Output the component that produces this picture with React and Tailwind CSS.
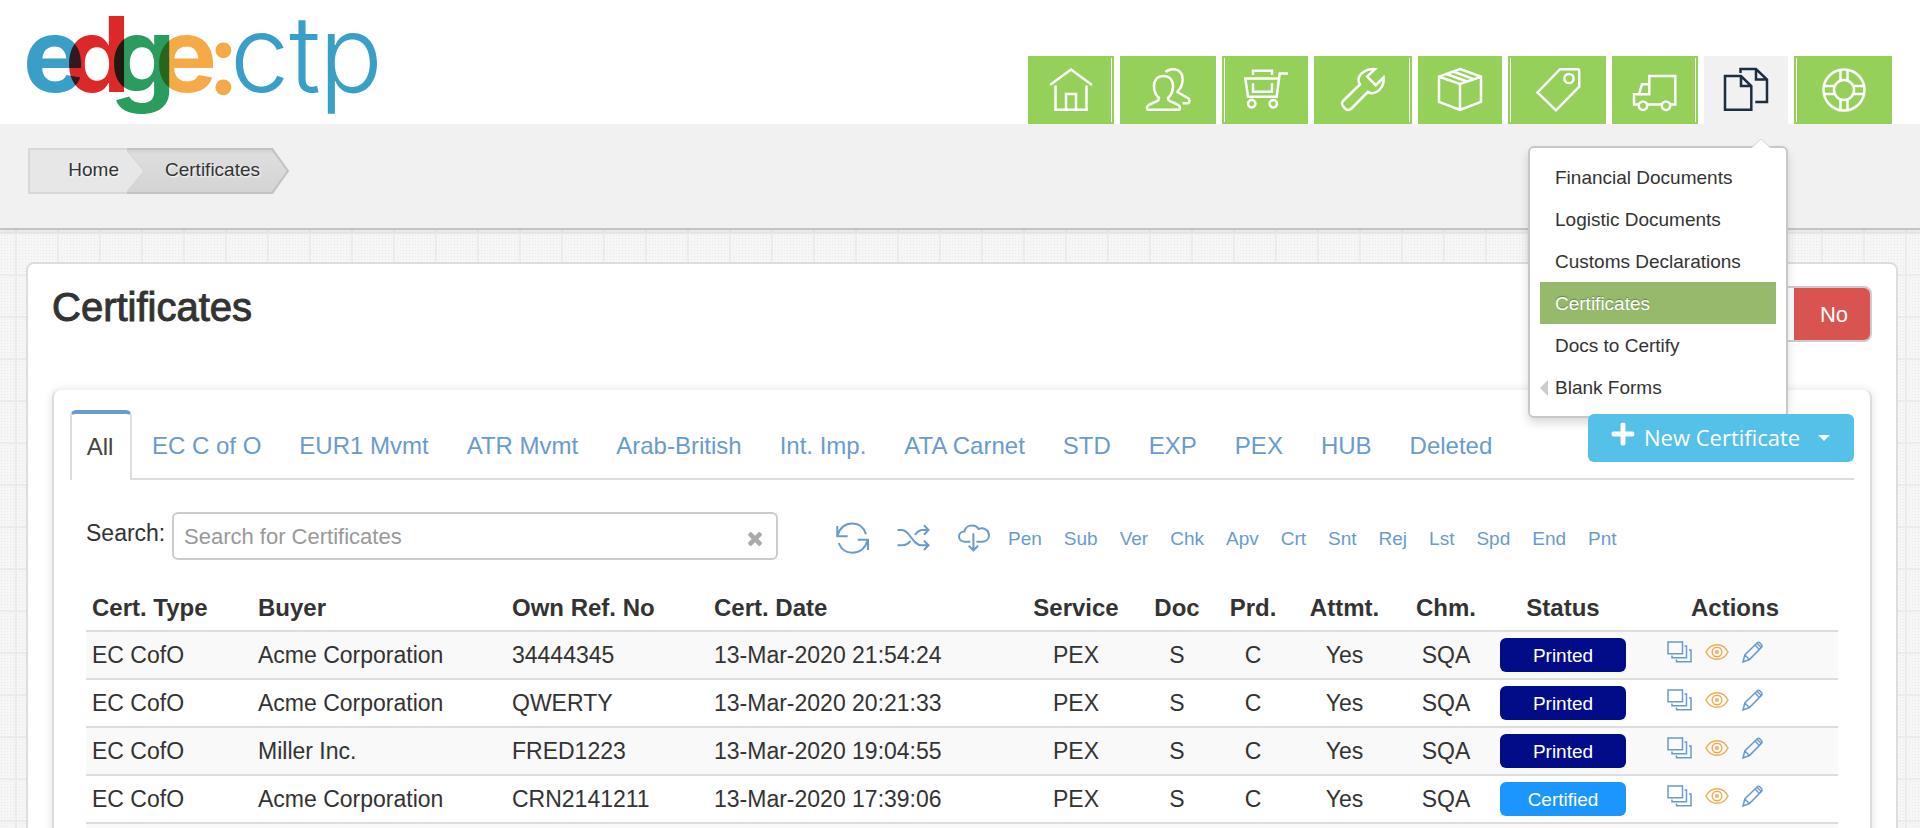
import { FaPlus, FaTimes } from "react-icons/fa";

const navItems = [
  {
    label: "Home",
    size: "w-[86px]",
    line: "border-r",
    icon: <path d="M1 17 22 1.5 43 17M6.5 17.5v24.2h31V17.5M17 41V26h10v15" />,
  },
  {
    label: "Contacts",
    size: "w-[96px]",
    line: "",
    icon: (
      <>
        <path d="M17.5 8c6 0 9.500 4 9.500 10 0 5-1.500 9-5 12 0 2 .5 2.500 2 3.200l7.500 3.300c2 1 2.500 2 2.500 3.500 0 1.300-.5 1.700-1.500 1.700h-30C1.500 41.700 1 41.300 1 40c0-1.500.5-2.500 2.500-3.500L11 33.200c1.500-.7 2-1.200 2-3.200C9.500 27 8 23 8 18 8 12 11.500 8 17.500 8z" />
        <path d="M19.500 4C23 .5 31-.5 35 5c2.500 4 2 9 0 14-1 2.500-3.500 3-3.500 5l9.500 5.500c2 1 2.500 1.500 2.500 3 0 2-.5 2.700-2 2.700h-5" />
      </>
    ),
  },
  {
    label: "Orders",
    size: "w-[86px]",
    line: "border-l",
    icon: (
      <>
        <path d="M44 5.500h-8.300l-3 23.200H4L1.300 10.500h33.500M9 7V2.700h19V7M9 15.300v8.400h19v-8.400" />
        <circle cx="7.700" cy="35.700" r="3.700" />
        <circle cx="29.300" cy="35.700" r="3.700" />
      </>
    ),
  },
  {
    label: "Tools",
    size: "w-[98px]",
    line: "border-r",
    icon: (
      <path d="M34 1.200C25 0 17.500 6 17.500 12c0 2.500.8 3 1.500 4.500L2.500 32.500C0 35 1 37 2.500 39l2 2c2 1.500 4 1.200 6-.5L26.700 24C35 28 43.500 20 42.500 9.500l-7.800 7.700-8.500-8.700z" />
    ),
  },
  {
    label: "Products",
    size: "w-[84px]",
    line: "",
    icon: (
      <path d="M22 1 43 8.700V34l-21 8L1 34V8.700zM1 8.700l21 7.300 21-7.300M22 16v26M8.500 6l20.700 7.500M15 3.500l20.700 7.700" />
    ),
  },
  {
    label: "Pricing",
    size: "w-[98px]",
    line: "border-l",
    icon: (
      <>
        <path d="M1.500 24.500 24 1.200h17.500c1.300 0 1.700.5 1.700 1.700v15.800L20 42.300z" />
        <circle cx="33" cy="10.500" r="4.600" />
      </>
    ),
  },
  {
    label: "Logistics",
    size: "w-[86px]",
    line: "border-r",
    icon: (
      <>
        <path d="M5.500 36.500H1V26.300h15.300V8h26v28.500h-4.800M28.500 36.500H14.500M6 26.300 9 16.200h7.300V27" />
        <circle cx="10" cy="37.700" r="4.200" />
        <circle cx="33" cy="37.700" r="4.200" />
      </>
    ),
  },
  {
    label: "Documents",
    size: "w-[84px]",
    line: "",
    active: true,
    icon: (
      <path d="M1 8h16l10.300 10v23.700H1zM17 8v10h10.300M16.500 5V1H32l11 10.500V34H31.300M32 1v10.500h11" />
    ),
  },
  {
    label: "Help",
    size: "w-[98px]",
    line: "border-l",
    icon: (
      <>
        <circle cx="22" cy="22" r="20.500" />
        <circle cx="22" cy="22" r="10" />
        <path d="M18.500 2v11M25.500 2v11M18.500 31.500v11M25.500 31.500v11M2 18h11M2 26h11M31.500 18h11M31.500 26h11" />
      </>
    ),
  },
];

const menuItems = [
  { label: "Financial Documents" },
  { label: "Logistic Documents" },
  { label: "Customs Declarations" },
  { label: "Certificates", active: true },
  { label: "Docs to Certify" },
  { label: "Blank Forms", submenu: true },
];

const tabs = [
  "EC C of O",
  "EUR1 Mvmt",
  "ATR Mvmt",
  "Arab-British",
  "Int. Imp.",
  "ATA Carnet",
  "STD",
  "EXP",
  "PEX",
  "HUB",
  "Deleted",
];

const filters = ["Pen", "Sub", "Ver", "Chk", "Apv", "Crt", "Snt", "Rej", "Lst", "Spd", "End", "Pnt"];

const certificates = [
  { buyer: "Acme Corporation", ref: "34444345", date: "13-Mar-2020 21:54:24", status: "Printed" },
  { buyer: "Acme Corporation", ref: "QWERTY", date: "13-Mar-2020 20:21:33", status: "Printed" },
  { buyer: "Miller Inc.", ref: "FRED1223", date: "13-Mar-2020 19:04:55", status: "Printed" },
  { buyer: "Acme Corporation", ref: "CRN2141211", date: "13-Mar-2020 17:39:06", status: "Certified" },
];

function Logo() {
  return (
    <svg
      width="370"
      height="116"
      viewBox="0 0 370 116"
      role="img"
      aria-label="edge:ctp"
      className="isolate overflow-visible"
    >
      <g fontFamily="Inter, sans-serif" fontWeight="700" fontSize="104">
        <text x="-1" y="86" fill="#399fc8" className="mix-blend-multiply">e</text>
        <text x="41" y="86" fill="#dc2828" className="mix-blend-multiply">d</text>
        <text x="86" y="86" fill="#299c5e" className="mix-blend-multiply">g</text>
        <text x="131" y="86" fill="#f5a947" className="mix-blend-multiply">e</text>
      </g>
      <text x="186" y="88" fill="#f5a947" fontFamily="Lato, sans-serif" fontWeight="700" fontSize="104">:</text>
      <g fontFamily="Inter, sans-serif" fontWeight="300" fontSize="106" fill="#399fc8">
        <text x="206" y="86">c</text>
        <text x="265" y="86">t</text>
        <text x="295" y="86">p</text>
      </g>
    </svg>
  );
}

function DocumentsMenu() {
  return (
    <div className="absolute top-[90px] right-0 z-10 w-[260px] rounded-md border-2 border-[#c8c8c8] bg-white px-[10px] py-2 shadow-[0_5px_10px_rgba(0,0,0,0.15)]">
      <svg width="20" height="11" viewBox="0 0 20 11" className="absolute -top-[10px] right-[15px]">
        <path d="M0 11 10 1l10 10z" fill="#fff" />
        <path d="M0 10 10 1l10 9" fill="none" stroke="#d5d5d5" />
      </svg>
      <ul>
        {menuItems.map((item) => (
          <li key={item.label}>
            <a
              href="#"
              className={`flex h-[42px] items-center pt-[2px] text-[19px] ${
                item.active
                  ? "bg-[#96b96c] pl-[15px] text-white [text-shadow:0_-1px_1px_rgba(0,0,0,0.3)]"
                  : item.submenu
                  ? "gap-[7px] text-[#333]"
                  : "pl-[15px] text-[#333]"
              }`}
            >
              {item.submenu && (
                <svg width="8" height="16" viewBox="0 0 8 16" fill="#ccc">
                  <path d="M8 0v16L0 8z" />
                </svg>
              )}
              {item.label}
            </a>
          </li>
        ))}
      </ul>
    </div>
  );
}

function Header() {
  return (
    <header className="flex items-end justify-between bg-white pr-7 pl-6">
      <div className="h-[124px] pt-[6px]">
        <Logo />
      </div>
      <nav className="flex gap-[6px]">
        {navItems.map((item) => (
          <div key={item.label} className="relative">
            <a
              href="#"
              aria-label={item.label}
              className={`block h-[68px] p-[2px] ${item.size} ${
                item.active ? "bg-[#f1f1f1] text-[#1c2f42]" : "bg-[#95d05a] text-white"
              }`}
            >
              <span className={`flex h-full items-center justify-center border-white ${item.line}`}>
                <svg
                  width="44"
                  height="44"
                  viewBox="0 0 44 44"
                  fill="none"
                  stroke="currentColor"
                  strokeWidth="2.5"
                  className="overflow-visible"
                >
                  {item.icon}
                </svg>
              </span>
            </a>
            {item.active && <DocumentsMenu />}
          </div>
        ))}
      </nav>
    </header>
  );
}

function Breadcrumb() {
  return (
    <div className="border-b-2 border-[#c4c4c4] bg-[#f1f1f1] px-7 pt-6 pb-[34px] shadow-[0_2px_4px_rgba(0,0,0,0.08)]">
      <nav className="flex h-[46px] text-[19px] text-[#333] [text-shadow:1px_1px_2px_#fff]">
        <a
          href="#"
          className="flex w-[99px] items-center justify-end border-y-2 border-l-2 border-[#d8d8d8] bg-[#e7e7e7] pr-2 pb-[2px]"
        >
          Home
        </a>
        <a href="#" className="relative flex w-[162px] items-center pb-[2px] pl-[38px]">
          <svg width="162" height="46" viewBox="0 0 162 46" className="absolute inset-0">
            <defs>
              <linearGradient id="crumb" x1="0" y1="0" x2="0" y2="1">
                <stop offset="0" stopColor="#cfcfcf" />
                <stop offset="0.15" stopColor="#dedede" />
                <stop offset="1" stopColor="#d3d3d3" />
              </linearGradient>
            </defs>
            <path d="M0 0h146l16 23-16 23H0z" fill="url(#crumb)" />
            <path d="M0 1h145l16 22-16 22H0" fill="none" stroke="#c2c2c2" strokeWidth="2" />
            <path d="M-2 1 17 23-2 45z" fill="#e7e7e7" />
            <path d="M0 2 17 23 0 44" fill="none" stroke="#d3d3d3" />
          </svg>
          <span className="relative">Certificates</span>
        </a>
      </nav>
    </div>
  );
}

function Tabs() {
  return (
    <div className="flex justify-between border-b-2 border-[#ddd]">
      <nav className="-mb-[3px] flex gap-[2px] text-2xl">
        <a
          href="#"
          className="mb-px flex h-[70px] w-[62px] items-center justify-center rounded-t-md border-x-2 border-t-4 border-x-[#ddd] border-t-[#6b9bcb] bg-white pr-[2px] text-[#444]"
        >
          All
        </a>
        {tabs.map((tab) => (
          <a
            key={tab}
            href="#"
            className="flex h-[70px] items-center px-[18px] pt-[2px] whitespace-nowrap text-[#699bcd]"
          >
            {tab}
          </a>
        ))}
      </nav>
      <button className="relative z-20 mt-1 flex h-12 w-[266px] items-center rounded-md bg-[#56c1e8] pl-[22px] font-['Open_Sans',sans-serif] text-[22px] text-white">
        <FaPlus className="mb-2 size-[26px]" />
        <span className="ml-2 pb-[2px] whitespace-nowrap">New Certificate</span>
        <svg width="12" height="6" viewBox="0 0 12 6" fill="currentColor" className="ml-[18px]">
          <path d="M0 0h12L6 6z" />
        </svg>
      </button>
    </div>
  );
}

function Toolbar() {
  return (
    <div className="flex items-center pt-8 pl-4">
      <label htmlFor="search" className="w-[86px] pb-[6px] text-[23px] text-[#333]">
        Search:
      </label>
      <div className="relative w-[606px]">
        <input
          id="search"
          type="text"
          placeholder="Search for Certificates"
          className="h-12 w-full rounded-md border-2 border-[#ccc] bg-white pt-[2px] pr-12 pl-[10px] text-[22px] placeholder:text-[#999]"
        />
        <button aria-label="Clear search" className="absolute top-[18px] right-[14px] text-[#aaa]">
          <FaTimes className="size-[18px]" stroke="currentColor" strokeWidth="40" />
        </button>
      </div>
      <div className="ml-[58px] flex items-center gap-[27px] pt-1 text-[#699bcd]">
        <a href="#" aria-label="Refresh">
          <svg width="34" height="34" viewBox="0 0 34 34" fill="none" stroke="currentColor" strokeWidth="2">
            <path d="M1.300 5v10.300h10.400M1.600 14.500C4 6 10 2.500 16.500 2.500 23 2.500 28 6.500 30 13.300M2.700 22C5 28 10 31.700 16.500 31.700 24 31.700 29 28 31.800 19M21.700 18.700H32V29" />
          </svg>
        </a>
        <a href="#" aria-label="Shuffle">
          <svg width="34" height="34" viewBox="0 0 34 34" fill="none" stroke="currentColor" strokeWidth="2">
            <path d="M.5 9H5c8 0 10 15.300 20 15.300h6M.5 24.300H5c4 0 6.500-2 8.500-4.500M18 14c2-3 4.500-5 8-5h5M27 4.300 31.500 9 27 13.700M27 19.600l4.500 4.700L27 29" />
          </svg>
        </a>
        <a href="#" aria-label="Download">
          <svg width="32" height="34" viewBox="0 0 32 34" fill="none" stroke="currentColor" strokeWidth="2">
            <path d="M12.300 20.700H7C3.500 20.700 1 18.500 1 15.500c0-2.800 2.200-5 5.500-5C7 6.500 10.500 4.500 14 4.500c3 0 5.500 1.500 6.500 3.500 5-2 10.500 1 10.500 6.300 0 3.700-2.700 6.400-6.500 6.400h-6M15.400 12.300v17M10.700 24.700l4.700 4.600 4.700-4.600" />
          </svg>
        </a>
      </div>
      <div className="ml-[18px] flex gap-[22px] pt-[6px] text-[19px] text-[#699bcd]">
        {filters.map((filter) => (
          <a key={filter} href="#">
            {filter}
          </a>
        ))}
      </div>
    </div>
  );
}

function RowActions() {
  return (
    <div className="flex items-center gap-[13px] pb-[7px] pl-[29px]">
      <a href="#" aria-label="Copy" className="text-[#699bcd]">
        <svg width="25" height="22" viewBox="0 0 25 22" fill="none" stroke="currentColor" strokeWidth="1.5">
          <path d="M1 1h14.500v11.700H1zM17.500 5h2v11.700H5V14.500M22 9h2v11.700H9.500V18.500" />
        </svg>
      </a>
      <a href="#" aria-label="View" className="text-[#f0ad57]">
        <svg width="24" height="18" viewBox="0 0 24 18" fill="none" stroke="currentColor" strokeWidth="1.5">
          <path d="M1 9c2.500-5 6.500-7.300 11-7.300S20.500 4 23 9c-2.500 5-6.500 7.300-11 7.300S3.500 14 1 9z" />
          <circle cx="12" cy="9" r="4.800" />
          <circle cx="12" cy="9" r="1.300" />
        </svg>
      </a>
      <a href="#" aria-label="Edit" className="text-[#699bcd]">
        <svg width="21" height="22" viewBox="0 0 21 22" fill="none" stroke="currentColor" strokeWidth="1.5">
          <path d="M1 21l1.800-7L15 2c1-.9 2-.9 3 0l1.400 1.400c.9 1 .9 2 0 3L7.500 18.500zM2.800 14l4.700 4.500M13 4l4.700 4.700M15 2.300l4.500 4.500" />
        </svg>
      </a>
    </div>
  );
}

function CertificatesTable() {
  return (
    <table className="mx-4 mt-[22px] w-[calc(100%-32px)] table-fixed border-collapse text-[23px] text-[#333]">
      <thead>
        <tr className="h-[49px] border-b-2 border-[#ddd] text-2xl">
          <th className="w-[166px] px-[6px] pt-[3px] text-left">Cert. Type</th>
          <th className="w-[254px] px-[6px] pt-[3px] text-left">Buyer</th>
          <th className="w-[202px] px-[6px] pt-[3px] text-left">Own Ref. No</th>
          <th className="px-[6px] pt-[3px] text-left">Cert. Date</th>
          <th className="w-[126px] pt-[3px]">Service</th>
          <th className="w-[76px] pt-[3px]">Doc</th>
          <th className="w-[76px] pt-[3px]">Prd.</th>
          <th className="w-[107px] pt-[3px]">Attmt.</th>
          <th className="w-[96px] pt-[3px]">Chm.</th>
          <th className="w-[138px] pt-[3px]">Status</th>
          <th className="w-[206px] pt-[3px]">Actions</th>
        </tr>
      </thead>
      <tbody>
        {certificates.map((cert) => (
          <tr key={cert.ref} className="h-12 border-b-2 border-[#ddd] odd:bg-[#f9f9f9]">
            <td className="px-[6px]">EC CofO</td>
            <td className="px-[6px]">{cert.buyer}</td>
            <td className="px-[6px]">{cert.ref}</td>
            <td className="px-[6px]">{cert.date}</td>
            <td className="text-center">PEX</td>
            <td className="text-center">S</td>
            <td className="text-center">C</td>
            <td className="text-center">Yes</td>
            <td className="text-center">SQA</td>
            <td className="px-[6px]">
              <span
                className={`flex h-[34px] items-center justify-center rounded-md pt-[2px] text-[19px] text-white ${
                  cert.status === "Printed" ? "bg-[#020c88]" : "bg-[#1b96ff]"
                }`}
              >
                {cert.status}
              </span>
            </td>
            <td className="px-[6px]">
              <RowActions />
            </td>
          </tr>
        ))}
        <tr className="h-12 bg-[#f9f9f9]">
          <td colSpan={11} />
        </tr>
      </tbody>
    </table>
  );
}

export default function App() {
  return (
    <div className="h-screen overflow-hidden bg-[#f6f6f6] bg-[linear-gradient(to_right,#ebebeb_2px,transparent_2px),linear-gradient(to_bottom,#ebebeb_2px,transparent_2px),radial-gradient(#e9e9e9_1px,transparent_1px)] bg-[size:42px_42px,42px_42px,3px_3px] bg-[position:15px_22px,15px_22px,0_0] font-['Liberation_Sans',Arial,sans-serif]">
      <Header />
      <Breadcrumb />
      <main className="mt-8 mr-[22px] ml-[26px] rounded-lg border-2 border-[#ddd] bg-white px-6 pb-6">
        <div className="flex h-[126px] items-start justify-between pt-[22px]">
          <h1 className="text-[40px] leading-[42px] text-[#333] [-webkit-text-stroke:1px_#333]">Certificates</h1>
          <div className="flex h-14 overflow-hidden rounded-lg border-2 border-[#ccc] text-[22px]">
            <button aria-label="Yes" className="w-[76px] bg-white" />
            <button className="w-[76px] bg-[#d95350] pl-1 text-white">No</button>
          </div>
        </div>
        <section className="rounded-lg border-x-2 border-[#ddd] bg-white px-4 pt-5 pb-6 shadow-[0_0_10px_rgba(0,0,0,0.12)]">
          <Tabs />
          <Toolbar />
          <CertificatesTable />
        </section>
      </main>
    </div>
  );
}
